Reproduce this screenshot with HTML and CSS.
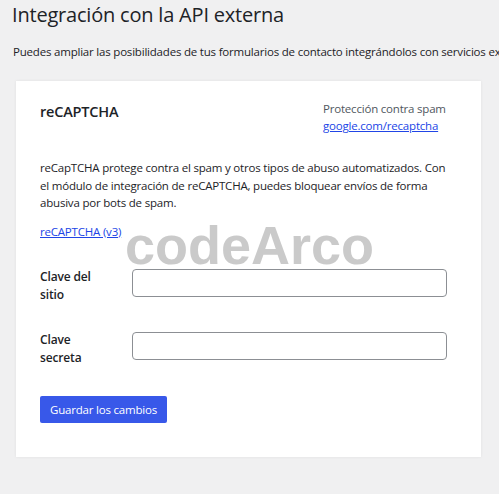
FILE: index.html
```html
<!DOCTYPE html>
<html lang="es">
<head>
<meta charset="utf-8">
<title>Integración con la API externa</title>
<link rel="stylesheet" href="styles.css">
</head>
<body>
<div class="page">
  <h1 class="title">Integración con la API externa</h1>
  <p class="intro">Puedes ampliar las posibilidades de tus formularios de contacto integrándolos con servicios externos.</p>
  <div class="card">
    <div class="card-head">
      <h2 class="card-title">reCAPTCHA</h2>
      <div class="aside">
        <div class="aside-label">Protección contra spam</div>
        <a class="link" href="#">google.com/recaptcha</a>
      </div>
    </div>
    <p class="desc">reCapTCHA protege contra el spam y otros tipos de abuso automatizados. Con el módulo de integración de reCAPTCHA, puedes bloquear envíos de forma abusiva por bots de spam.</p>
    <p class="version"><a class="link" href="#">reCAPTCHA (v3)</a></p>
    <div class="form">
      <div class="row">
        <label class="label" for="sitekey">Clave del sitio</label>
        <input class="field" id="sitekey" type="text">
      </div>
      <div class="row">
        <label class="label" for="secret">Clave secreta</label>
        <input class="field" id="secret" type="text">
      </div>
    </div>
    <button class="button" type="button">Guardar los cambios</button>
  </div>
  <div class="watermark">codeArco</div>
</div>
</body>
</html>
```

FILE: styles.css
```css
* { box-sizing: border-box; }

html, body {
  margin: 0;
  padding: 0;
  background: #f0f0f1;
  overflow: hidden;
}

body {
  font-family: "Open Sans", "Noto Sans", sans-serif;
  color: #1d2327;
  font-size: 11.5px;
  letter-spacing: -0.2px;
}

.page {
  position: relative;
  width: 499px;
  height: 494px;
  overflow: hidden;
}

.title {
  margin: 2px 0 0 12px;
  font-size: 20px;
  line-height: 26px;
  font-weight: 400;
  letter-spacing: -0.2px;
  white-space: nowrap;
}

.intro {
  margin: 15px 0 0 13px;
  line-height: 18px;
  white-space: nowrap;
}

.card {
  margin: 20px 0 0 16px;
  width: 465px;
  background: #fff;
  padding: 19px 24px 34px;
  box-shadow: 0 0 3px rgba(0, 0, 0, 0.07);
}

.card-head {
  display: flex;
  justify-content: space-between;
  align-items: flex-start;
}

.card-title {
  margin: 2px 0 0;
  font-size: 14.5px;
  line-height: 20px;
  font-weight: 600;
  letter-spacing: -0.2px;
}

.aside {
  width: 134px;
  line-height: 17px;
}

.aside-label {
  color: #50575e;
}

.link {
  color: #2145e6;
  text-decoration: underline;
}

.desc {
  margin: 25px 0 0;
  line-height: 17.5px;
}

.version {
  margin: 11px 0 0;
  line-height: 17.5px;
}

.form {
  margin-top: 28px;
  display: flex;
  flex-direction: column;
  gap: 28px;
}

.row {
  display: flex;
  align-items: flex-start;
}

.label {
  flex: 0 0 92px;
  padding-right: 28px;
  font-size: 12px;
  font-weight: 600;
  line-height: 17.5px;
  letter-spacing: -0.15px;
}

.field {
  width: 315px;
  height: 28px;
  margin-top: 1px;
  border: 1px solid #8c8f94;
  border-radius: 4px;
  background: #fff;
  font: inherit;
  padding: 0 8px;
}

.button {
  margin-top: 30px;
  display: block;
  height: 27px;
  padding: 0 10px;
  border: 0;
  border-radius: 2px;
  background: #3858e9;
  color: #fff;
  font: inherit;
  letter-spacing: -0.2px;
}

.watermark {
  position: absolute;
  left: 125px;
  top: 218px;
  font-family: "Liberation Sans", Arial, sans-serif;
  font-weight: 700;
  font-size: 54px;
  line-height: 54px;
  letter-spacing: 0;
  color: rgba(150, 150, 150, 0.5);
  pointer-events: none;
}
```
